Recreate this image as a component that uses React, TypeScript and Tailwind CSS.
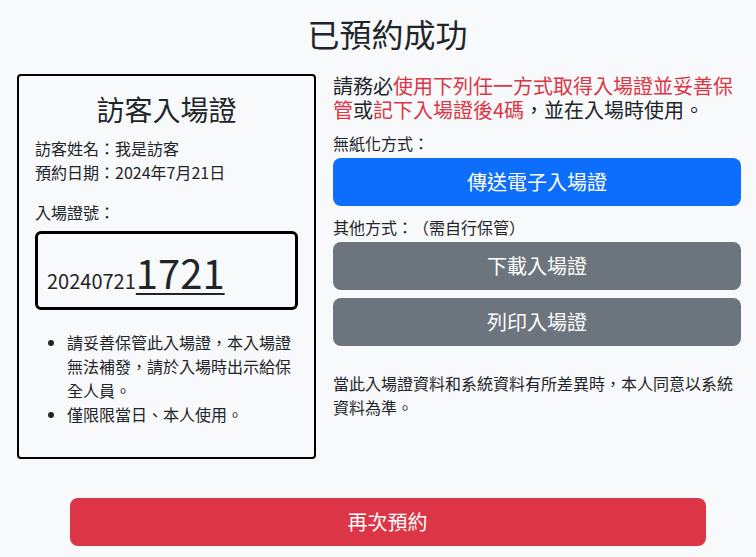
import React from "react";

export default function App() {
  return (
    <div
      className="min-h-[557px] w-[756px] bg-[#f8f9fa] text-[#212529] overflow-hidden [text-spacing-trim:space-all]"
      style={{ fontFamily: '"Noto Sans CJK TC", "Noto Sans", sans-serif' }}
    >
      <div className="ml-[17px] w-[741px] pt-[14px]">
        <h2 className="text-center text-[32px] leading-[38px] font-normal">已預約成功</h2>
        <div className="mt-[22px] flex gap-[17px] items-start">
          <div className="w-[299px] border-2 border-black rounded-[4px] p-4 pb-[18px]">
            <h3 className="text-center text-[28px] leading-[34px] mb-[10px]">訪客入場證</h3>
            <div className="text-base leading-6">訪客姓名：我是訪客</div>
            <div className="text-base leading-6">預約日期：2024年7月21日</div>
            <div className="text-base leading-6 mt-4">入場證號：</div>
            <div className="mt-[7px] border-[3px] border-black rounded-[6px] h-[79px] pl-[9px] pt-[14px]">
              <span className="text-[20px] leading-[48px]">20240721</span>
              <span className="text-[40px] leading-[48px] underline underline-offset-[4px] decoration-2">1721</span>
            </div>
            <ul className="mt-5 pl-8 list-disc text-base leading-6 mb-[13px]">
              <li>請妥善保管此入場證，本入場證無法補發，請於入場時出示給保全人員。</li>
              <li>僅限限當日、本人使用。</li>
            </ul>
          </div>
          <div className="w-[408px]">
            <p className="text-[20px] leading-6">
              請務必<span className="text-[#dc3545]">使用下列任一方式取得入場證並妥善保管</span>或<span className="text-[#dc3545]">記下入場證後4碼</span>，並在入場時使用。
            </p>
            <div className="mt-[9px] text-base leading-6">無紙化方式：</div>
            <button className="mt-[3px] w-full h-12 rounded-lg bg-[#0d6efd] text-white text-[20px]">傳送電子入場證</button>
            <div className="mt-[9px] text-base leading-6">其他方式：（需自行保管）</div>
            <button className="mt-[3px] w-full h-12 rounded-lg bg-[#6c757d] text-white text-[20px]">下載入場證</button>
            <button className="mt-2 w-full h-12 rounded-lg bg-[#6c757d] text-white text-[20px]">列印入場證</button>
            <p className="mt-[25px] text-base leading-6">當此入場證資料和系統資料有所差異時，本人同意以系統資料為準。</p>
          </div>
        </div>
        <div className="mt-[39px] flex justify-center">
          <button className="w-[636px] h-12 rounded-lg bg-[#dc3545] text-white text-[20px]">再次預約</button>
        </div>
      </div>
    </div>
  );
}
